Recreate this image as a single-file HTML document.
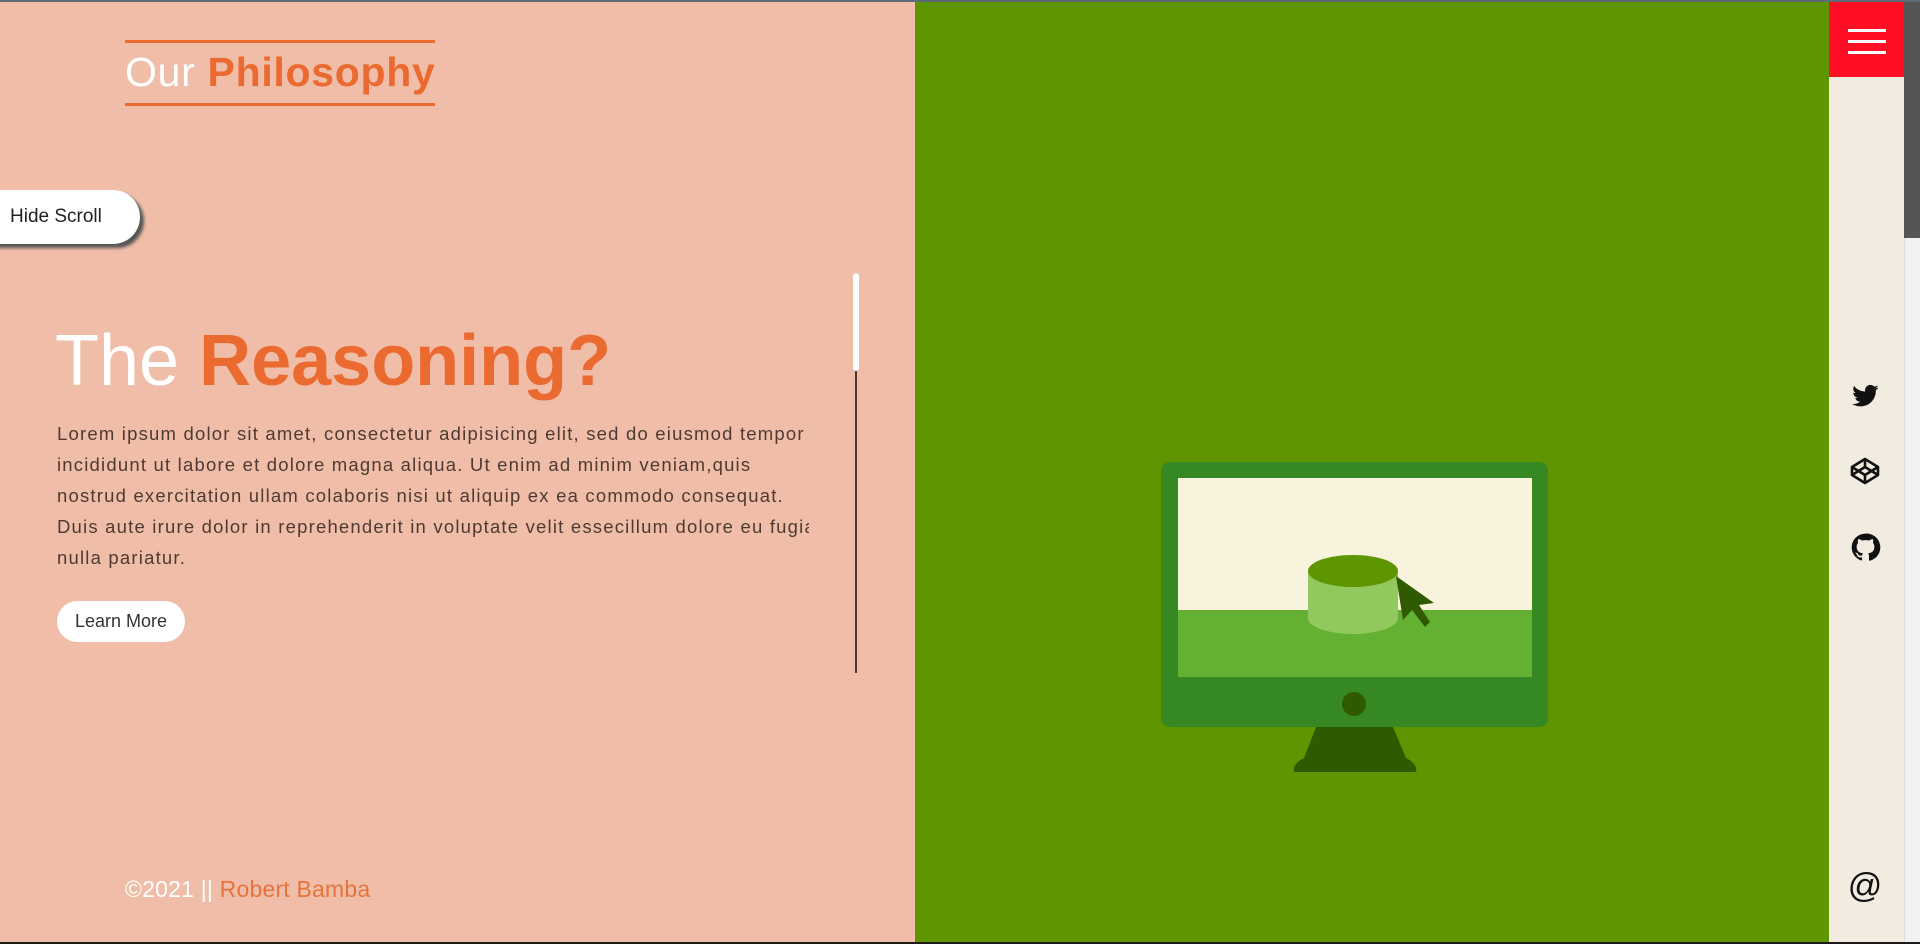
<!DOCTYPE html>
<html><head><meta charset="utf-8">
<style>
*{margin:0;padding:0;box-sizing:border-box}
html,body{width:1920px;height:944px;overflow:hidden;font-family:"Liberation Sans",sans-serif}
body{background:#1e1a18;position:relative}
.top{position:absolute;left:0;top:0;width:1920px;height:2px;background:#5d6b78}
.left{position:absolute;left:0;top:2px;width:915px;height:940px;background:#f0bea8}
.green{position:absolute;left:915px;top:2px;width:914px;height:940px;background:#5f9500}
.side{position:absolute;left:1829px;top:2px;width:75px;height:940px;background:#f2ebe0}
.menu{position:absolute;left:1829px;top:2px;width:75px;height:75px;background:#fe0f24}
.menu i{position:absolute;left:19px;width:38px;height:2.5px;background:#fff}
.sb{position:absolute;left:1904px;top:2px;width:16px;height:940px;background:#f1f1f1;border-left:1px solid #ddd}
.thumb{position:absolute;left:1904px;top:2px;width:16px;height:236px;background:#555}
.ph{position:absolute;left:125px;top:40px;width:310px;height:66px;border-top:3px solid #ea6a30;border-bottom:3px solid #ea6a30;font-size:41px;line-height:58px;color:#fff;white-space:nowrap;letter-spacing:0.7px}
.ph b{color:#ea6a30}
.hide{position:absolute;left:-20px;top:190px;width:160px;height:54px;background:#fff;border-radius:0 27px 27px 0;box-shadow:4px 4px 3px #555;font-size:19px;line-height:54px;padding-left:30px;color:#222}
.h1{position:absolute;left:55px;top:316px;font-size:72px;line-height:90px;color:#fff;white-space:nowrap}
.h1 b{color:#ea6a30}
.p{position:absolute;left:57px;top:418px;width:752px;height:160px;overflow:hidden;font-size:18.5px;letter-spacing:1.2px;line-height:31px;color:#4e3a33;white-space:nowrap}
.btn{position:absolute;left:57px;top:601px;width:128px;height:41px;border-radius:21px;background:#fff;font-size:18px;line-height:41px;text-align:center;color:#333}
.vl{position:absolute;left:855px;top:273px;width:2px;height:400px;background:#4b3a35}
.vw{position:absolute;left:853px;top:273px;width:6px;height:98px;background:#fff;border-radius:3px}
.foot{position:absolute;left:125px;top:876px;font-size:23px;letter-spacing:0.2px;color:#fff;white-space:nowrap}
.foot span{color:#e5733d}
</style></head><body>
<div class="top"></div>
<div class="left"></div>
<div class="green"></div>
<div class="side"></div>
<div class="menu"><i style="top:27px"></i><i style="top:38px"></i><i style="top:49px"></i></div>
<div class="sb"></div><div class="thumb"></div>

<div class="ph">Our <b>Philosophy</b></div>
<div class="hide">Hide Scroll</div>
<div class="h1">The <b>Reasoning?</b></div>
<div class="p">Lorem ipsum dolor sit amet, consectetur adipisicing elit, sed do eiusmod tempor<br>incididunt ut labore et dolore magna aliqua. Ut enim ad minim veniam,quis<br>nostrud exercitation ullam colaboris nisi ut aliquip ex ea commodo consequat.<br>Duis aute irure dolor in reprehenderit in voluptate velit essecillum dolore eu fugiat<br>nulla pariatur.</div>
<div class="btn">Learn More</div>
<div class="vl"></div><div class="vw"></div>
<div class="foot">©2021 || <span>Robert Bamba</span></div>

<svg style="position:absolute;left:0;top:0" width="1920" height="944">
  <path d="M1316 727 L1393 727 L1406 758 Q1418 764 1416 772 L1294 772 Q1292 764 1304 758Z" fill="#2f5a00"/>
  <rect x="1161" y="462" width="387" height="265" rx="9" fill="#368822"/>
  <rect x="1178" y="478" width="354" height="132" fill="#f8f3dc"/>
  <rect x="1178" y="610" width="354" height="67" fill="#64b033"/>
  <circle cx="1354" cy="704" r="12" fill="#2f5a00"/>
  <path d="M1308 571 L1308 618 A45 16 0 0 0 1398 618 L1398 571Z" fill="#92c95e"/>
  <ellipse cx="1353" cy="571" rx="45" ry="16" fill="#5f9500"/>
  <path d="M1396 576 L1403 620 L1412 610 L1425 627 L1430 622 L1419 605 L1434 603Z" fill="#2f5a00"/>
  <path transform="translate(1851,382) scale(1.2)" fill="#111" d="M23 4.6c-.8.4-1.7.6-2.6.7.9-.6 1.6-1.4 2-2.5-.9.5-1.9.9-2.9 1.1A4.5 4.5 0 0 0 11.8 8 12.9 12.9 0 0 1 2.5 3.3a4.5 4.5 0 0 0 1.4 6 4.5 4.5 0 0 1-2-.6 4.5 4.5 0 0 0 3.6 4.5 4.5 4.5 0 0 1-2 .1 4.5 4.5 0 0 0 4.2 3.1A9 9 0 0 1 1 18.3 12.8 12.8 0 0 0 7.9 20.3c8.3 0 12.8-6.9 12.8-12.8v-.6c.9-.6 1.7-1.4 2.3-2.3z"/>
  <g transform="translate(1850,456)" fill="none" stroke="#111" stroke-width="2.6" stroke-linejoin="round">
    <path d="M15 3 L28 11 L28 19 L15 27 L2 19 L2 11Z"/>
    <path d="M2 11 L15 19 L28 11 M15 3 L15 11 L2 19 M15 11 L28 19 M15 19 L15 27"/>
  </g>
  <path transform="translate(1851,533) scale(1.2)" fill="#111" d="M12 .5a11.5 11.5 0 0 0-3.6 22.4c.6.1.8-.3.8-.6v-2c-3.2.7-3.900-1.5-3.9-1.5-.5-1.3-1.3-1.7-1.3-1.7-1-.7.1-.7.1-.7 1.2.1 1.8 1.2 1.8 1.2 1 1.8 2.7 1.3 3.4 1 .1-.8.4-1.3.7-1.6-2.6-.3-5.3-1.3-5.3-5.7 0-1.3.5-2.3 1.2-3.1-.1-.3-.5-1.5.1-3.1 0 0 1-.3 3.2 1.2a11 11 0 0 1 5.8 0c2.2-1.5 3.2-1.2 3.2-1.2.6 1.6.2 2.8.1 3.1.7.8 1.2 1.8 1.2 3.1 0 4.4-2.7 5.4-5.3 5.7.4.4.8 1.1.8 2.2v3.3c0 .3.2.7.8.6A11.5 11.5 0 0 0 12 .5z"/>
  <text x="1865" y="897" font-family="Liberation Sans, sans-serif" font-size="34" fill="#111" text-anchor="middle">@</text>
</svg>
</body></html>
